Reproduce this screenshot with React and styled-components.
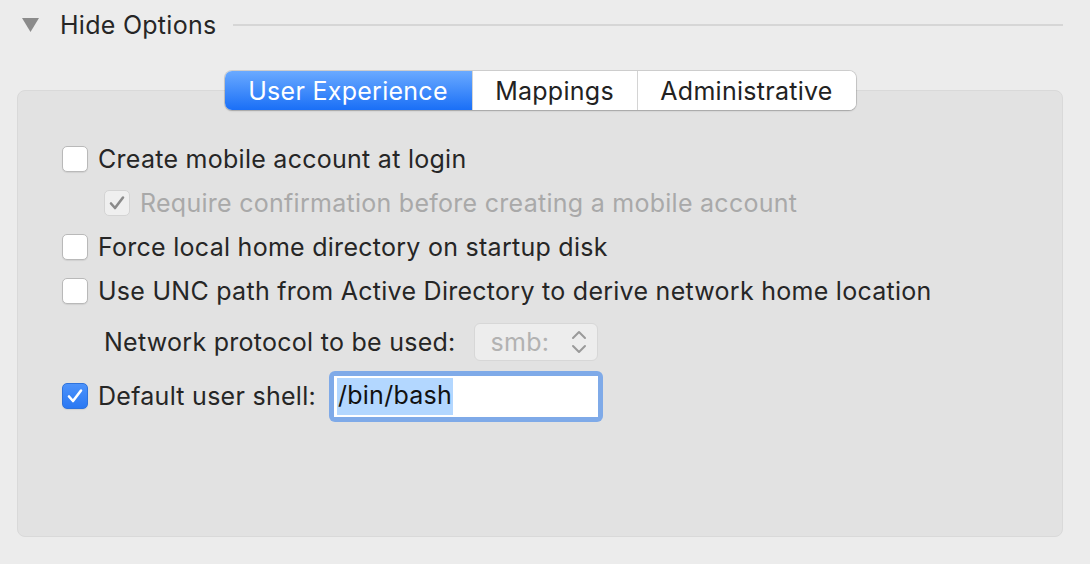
import React from "react";
import styled, { createGlobalStyle } from "styled-components";

const GlobalStyle = createGlobalStyle`
  html, body {
    margin: 0;
    padding: 0;
    background: #ececec;
    font-family: "Inter", "Noto Sans", sans-serif;
    -webkit-font-smoothing: antialiased;
  }
`;

const Page = styled.div`
  width: 1090px;
  height: 564px;
  overflow: hidden;
  background: #ececec;
  color: #262626;
  font-size: 25px;
  letter-spacing: 0.27px;
`;

const Header = styled.div`
  display: flex;
  align-items: center;
  height: 50px;
  padding: 0 27px 0 22px;
`;

const Triangle = styled.svg`
  width: 17px;
  height: 14px;
  margin-right: 21px;
  margin-top: -1px;
`;

const HeaderTitle = styled.span`
  color: #262626;
  white-space: nowrap;
`;

const HeaderLine = styled.div`
  flex: 1;
  height: 2px;
  background: #d6d6d6;
  margin-left: 17px;
`;

const Section = styled.div`
  margin: 21px 27px 0 17px;
  display: flex;
  flex-direction: column;
`;

const Tabs = styled.div`
  align-self: center;
  display: flex;
  height: 39px;
  border-radius: 7px;
  background: #fff;
  box-shadow: 0 0 0 1px rgba(0, 0, 0, 0.12), 0 1px 2px rgba(0, 0, 0, 0.18);
  margin-bottom: -20px;
  position: relative;
  z-index: 1;
  overflow: hidden;
`;

const Tab = styled.div`
  display: flex;
  align-items: center;
  justify-content: center;
  box-sizing: border-box;
  width: ${(p) => p.$w}px;
  color: ${(p) => (p.$active ? "#fff" : "#222")};
  background: ${(p) =>
    p.$active ? "linear-gradient(#6aaaff, #1a6ff7)" : "#fff"};
  border-left: ${(p) => (p.$first || p.$active ? "none" : "1px solid #d4d4d4")};
  white-space: nowrap;
`;

const Panel = styled.div`
  height: 447px;
  box-sizing: border-box;
  background: #e2e2e2;
  border: 1px solid #d9d9d9;
  border-radius: 8px;
  padding: 46px 0 0 44px;
`;

const Row = styled.div`
  display: flex;
  align-items: center;
  height: ${(p) => p.$h || 44}px;
  padding-left: ${(p) => p.$indent || 0}px;
  color: ${(p) => (p.$disabled ? "#a9a9a9" : "#262626")};
`;

const Box = styled.div`
  width: 26px;
  height: 26px;
  box-sizing: border-box;
  border-radius: 5px;
  margin-right: 10px;
  display: flex;
  align-items: center;
  justify-content: center;
  flex: none;
  background: ${(p) =>
    p.$blue ? "linear-gradient(#4d93fb, #2a78f3)" : p.$disabled ? "#efefef" : "#fff"};
  border: 1px solid
    ${(p) => (p.$blue ? "#2f73dc" : p.$disabled ? "#d4d4d4" : "#b9b9b9")};
  box-shadow: ${(p) => (p.$disabled ? "none" : "0 1px 1px rgba(0,0,0,0.08)")};
`;

const Check = ({ color }) => (
  <svg width="18" height="16" viewBox="0 0 18 16">
    <path
      d="M3 8.5 L7 13 L15 2.5"
      fill="none"
      stroke={color}
      strokeWidth="2.6"
      strokeLinecap="round"
      strokeLinejoin="round"
    />
  </svg>
);

const Checkbox = ({ checked, blue, disabled }) => (
  <Box $blue={blue} $disabled={disabled}>
    {checked && <Check color={blue ? "#fff" : "#8a8a8a"} />}
  </Box>
);

const Label = styled.span`
  white-space: nowrap;
`;

const Select = styled.div`
  width: 124px;
  height: 38px;
  box-sizing: border-box;
  margin-left: 18px;
  border-radius: 6px;
  border: 1px solid #d7d7d7;
  background: #ededed;
  display: flex;
  align-items: center;
  justify-content: space-between;
  padding: 0 10px 0 16px;
  color: #b2b2b2;
`;

const FocusRing = styled.div`
  margin-left: 13px;
  padding: 5px;
  border-radius: 6px;
  background: #7faae8;
  display: flex;
`;

const Field = styled.div`
  width: 264px;
  height: 41px;
  box-sizing: border-box;
  background: #fff;
  display: flex;
  align-items: center;
  padding-left: 3px;
`;

const Selected = styled.span`
  background: #b3d7ff;
  color: #111;
  padding: 2px 1px 5px;
  line-height: 1.2;
`;

export default function App() {
  return (
    <Page>
      <GlobalStyle />
      <Header>
        <Triangle viewBox="0 0 17 14">
          <path d="M0 0 H17 L8.5 14 Z" fill="#8b8b8b" />
        </Triangle>
        <HeaderTitle>Hide Options</HeaderTitle>
        <HeaderLine />
      </Header>
      <Section>
        <Tabs>
          <Tab $active $first $w={247}>User Experience</Tab>
          <Tab $w={165}>Mappings</Tab>
          <Tab $w={219}>Administrative</Tab>
        </Tabs>
        <Panel>
          <Row>
            <Checkbox />
            <Label>Create mobile account at login</Label>
          </Row>
          <Row $indent={42} $disabled>
            <Checkbox checked disabled />
            <Label>Require confirmation before creating a mobile account</Label>
          </Row>
          <Row>
            <Checkbox />
            <Label>Force local home directory on startup disk</Label>
          </Row>
          <Row>
            <Checkbox />
            <Label>Use UNC path from Active Directory to derive network home location</Label>
          </Row>
          <Row $h={58} $indent={42}>
            <Label>Network protocol to be used:</Label>
            <Select>
              <span>smb:</span>
              <svg width="16" height="26" viewBox="0 0 16 26">
                <path
                  d="M2 9 L8 3 L14 9 M2 17 L8 23 L14 17"
                  fill="none"
                  stroke="#9a9a9a"
                  strokeWidth="2"
                  strokeLinecap="round"
                  strokeLinejoin="round"
                />
              </svg>
            </Select>
          </Row>
          <Row $h={50}>
            <Checkbox checked blue />
            <Label>Default user shell:</Label>
            <FocusRing>
              <Field>
                <Selected>/bin/bash</Selected>
              </Field>
            </FocusRing>
          </Row>
        </Panel>
      </Section>
    </Page>
  );
}
